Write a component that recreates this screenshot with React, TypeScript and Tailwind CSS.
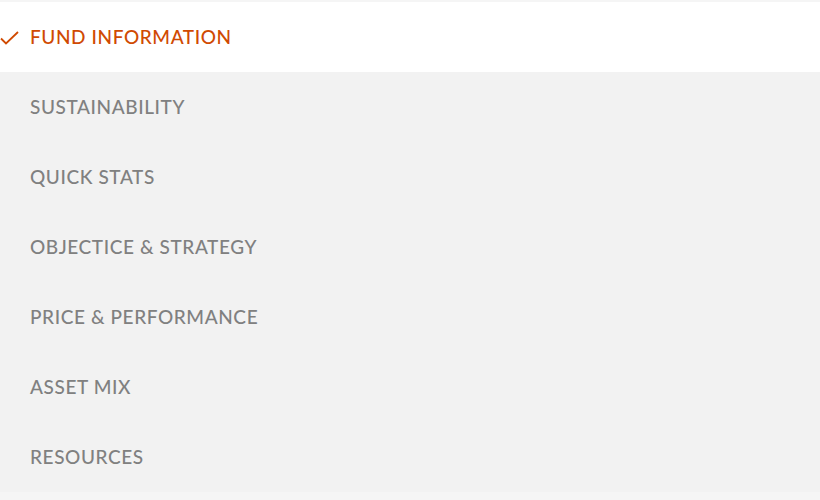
import React from "react";

const items = [
  "SUSTAINABILITY",
  "QUICK STATS",
  "OBJECTICE & STRATEGY",
  "PRICE & PERFORMANCE",
  "ASSET MIX",
  "RESOURCES",
];

export default function App() {
  return (
    <div
      className="w-[820px] h-[500px] bg-[#f5f5f5] pt-[2px] overflow-hidden"
      style={{ fontFamily: "Lato, 'Noto Sans', sans-serif" }}
    >
      <ul>
        <li className="relative h-[70px] bg-white flex items-center pl-[30px] text-[19px] font-medium text-[#d04a02] tracking-[0.6px]">
          <svg
            className="absolute left-0 top-[29px]"
            width="19"
            height="14"
            viewBox="0 0 19 14"
            fill="none"
            stroke="#d04a02"
            strokeWidth="1.8"
          >
            <path d="M1 7.5 L6 12.5 L18 1" />
          </svg>
          FUND INFORMATION
        </li>
        {items.map((t) => (
          <li
            key={t}
            className="h-[70px] bg-[#f2f2f2] flex items-center pl-[30px] text-[19px] font-medium text-[#808080] tracking-[0.6px]"
          >
            {t}
          </li>
        ))}
      </ul>
    </div>
  );
}
